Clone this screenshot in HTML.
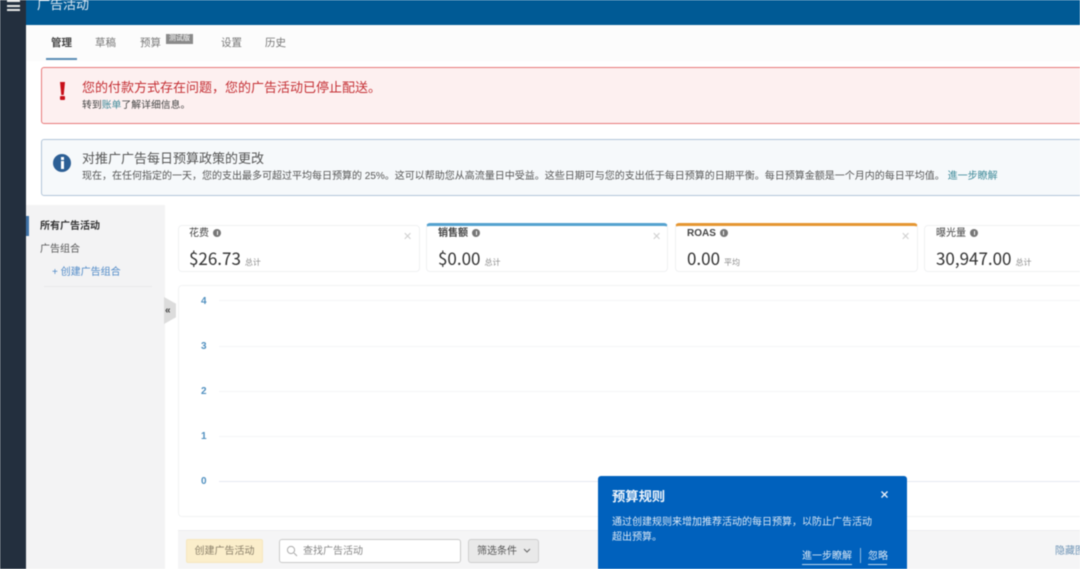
<!DOCTYPE html>
<html lang="zh"><head><meta charset="utf-8"><title>广告活动</title>
<style>
*{box-sizing:border-box}
html,body{margin:0;padding:0;width:1080px;height:569px;overflow:hidden;background:#fff}
body{position:relative;font-family:"Liberation Sans","Noto Sans CJK SC",sans-serif;color:#333}
.a{position:absolute;white-space:nowrap}
#wrap{position:absolute;left:0;top:0;width:1080px;height:569px;overflow:hidden;filter:blur(.5px)}
.card{position:absolute;top:225px;height:47px;background:#fff;border:1px solid #f0f1f2;border-radius:4px}
.card.t{top:223px;height:49px;border-top:3px solid}
.lbl{position:absolute;font-size:10px;color:#444;white-space:nowrap;line-height:12px}
.val{position:absolute;font-family:"Noto Sans CJK SC","Liberation Sans",sans-serif;font-size:17px;color:#333;white-space:nowrap;line-height:20px}
.sub{font-size:8px;color:#888;margin-left:4px}
.i{display:inline-block;position:relative;width:8px;height:8px;border-radius:50%;background:#777;margin-left:4px;vertical-align:-1px}
.i:after{content:"";position:absolute;left:3.5px;top:2px;width:1px;height:4px;background:#fff}
.x{position:absolute;font-size:11px;color:#d0d0d0;line-height:12px}
.y{position:absolute;left:201px;width:8px;font-size:10px;font-weight:bold;color:#4f8fbf;line-height:12px}
.g{position:absolute;left:219px;right:0;height:1px;background:#f4f5f7}
</style></head><body>
<div id="wrap">
<div class="a" style="left:0;top:0;width:26px;height:569px;background:#232f3e"></div>
<div class="a" style="left:7px;top:0;width:13px;height:2px;background:#e8e8e8"></div>
<div class="a" style="left:7px;top:5px;width:13px;height:2px;background:#e8e8e8"></div>
<div class="a" style="left:7px;top:9px;width:13px;height:2px;background:#e8e8e8"></div>

<div class="a" style="left:26px;top:0;width:1054px;height:25px;background:#005a95"></div>
<div class="a" style="left:37px;top:-4px;font-size:13px;line-height:17px;color:#dfeaf3">广告活动</div>

<div class="a" style="left:26px;top:25px;width:1054px;height:36px;background:#fcfcfc"></div>
<div class="a" style="left:51px;top:36px;font-size:10.5px;line-height:14px;font-weight:bold;color:#444">管理</div>
<div class="a" style="left:46px;top:58px;width:31px;height:2px;background:#5b8db5"></div>
<div class="a" style="left:95px;top:36px;font-size:10.5px;line-height:14px;color:#777">草稿</div>
<div class="a" style="left:140px;top:36px;font-size:10.5px;line-height:14px;color:#777">预算</div>
<div class="a" style="left:166px;top:34px;width:27px;height:10px;background:#8a8a8a;color:#fff;font-size:7px;line-height:9px;text-align:center">测试版</div>
<div class="a" style="left:221px;top:36px;font-size:10.5px;line-height:14px;color:#777">设置</div>
<div class="a" style="left:265px;top:36px;font-size:10.5px;line-height:14px;color:#777">历史</div>

<div class="a" style="left:41px;top:67px;width:1045px;height:57px;background:#fdf0f0;border:1px solid #e8797a;border-radius:3px"></div>
<div class="a" style="left:60px;top:82px;width:5px;height:13px;background:#c8101a;clip-path:polygon(0 0,100% 0,75% 100%,25% 100%)"></div>
<div class="a" style="left:60px;top:96px;width:5px;height:4px;background:#c8101a;border-radius:1px"></div>
<div class="a" style="left:82px;top:80px;font-size:13px;line-height:16px;color:#c42e33">您的付款方式存在问题，您的广告活动已停止配送。</div>
<div class="a" style="left:82px;top:99px;font-size:9.85px;line-height:13px;color:#444">转到<span style="color:#3f8a99">账单</span>了解详细信息。</div>

<div class="a" style="left:41px;top:139px;width:1045px;height:57px;background:#f6f9fb;border:1px solid #b2c5d8;border-radius:3px"></div>
<div class="a" style="left:53px;top:154px;width:18px;height:18px;border-radius:50%;background:#2c5f95"></div>
<div class="a" style="left:61px;top:157px;width:2.5px;height:2.5px;background:#fff"></div>
<div class="a" style="left:60.5px;top:161px;width:3px;height:8px;background:#fff"></div>
<div class="a" style="left:82px;top:150px;font-size:13px;line-height:17px;color:#555">对推广广告每日预算政策的更改</div>
<div class="a" style="left:82px;top:170px;font-size:10px;line-height:14px;color:#555">现在，在任何指定的一天，您的支出最多可超过平均每日预算的 25%。这可以帮助您从高流量日中受益。这些日期可与您的支出低于每日预算的日期平衡。每日预算金额是一个月内的每日平均值。 <span style="color:#3f8a99">進一步瞭解</span></div>

<div class="a" style="left:26px;top:205px;width:139px;height:364px;background:#f3f3f4"></div>
<div class="a" style="left:26px;top:216px;width:3px;height:20px;background:#3f73a8"></div>
<div class="a" style="left:40px;top:220px;font-size:10px;line-height:13px;font-weight:bold;color:#333">所有广告活动</div>
<div class="a" style="left:40px;top:243px;font-size:10px;line-height:13px;color:#555">广告组合</div>
<div class="a" style="left:52px;top:266px;font-size:10px;line-height:13px;color:#4e89c7">+ 创建广告组合</div>
<div class="a" style="left:44px;top:286px;width:108px;height:1px;background:#e9e9ea"></div>
<div class="a" style="left:164px;top:297px;width:12px;height:27px;background:#dcdcdc;clip-path:polygon(0 0,100% 25%,100% 75%,0 100%)"></div>
<div class="a" style="left:165px;top:304px;font-size:10px;line-height:13px;font-weight:bold;color:#444">«</div>

<div class="card" style="left:178px;width:242px"></div>
<div class="lbl" style="left:189px;top:228px">花费<span class="i"></span></div>
<div class="val" style="left:189px;top:248px">$26.73<span class="sub">总计</span></div>
<div class="x" style="left:403px;top:231px">✕</div>

<div class="card t" style="left:426px;width:242px;border-top-color:#55a2cf"></div>
<div class="lbl" style="left:438px;top:228px;font-weight:bold">销售额<span class="i"></span></div>
<div class="val" style="left:438px;top:248px">$0.00<span class="sub">总计</span></div>
<div class="x" style="left:652px;top:231px">✕</div>

<div class="card t" style="left:675px;width:243px;border-top-color:#e59632"></div>
<div class="lbl" style="left:687px;top:228px;font-weight:bold">ROAS<span class="i"></span></div>
<div class="val" style="left:687px;top:248px">0.00<span class="sub">平均</span></div>
<div class="x" style="left:901px;top:231px">✕</div>

<div class="card" style="left:924px;width:170px"></div>
<div class="lbl" style="left:936px;top:228px">曝光量<span class="i"></span></div>
<div class="val" style="left:936px;top:248px">30,947.00<span class="sub">总计</span></div>

<div class="a" style="left:178px;top:285px;width:920px;height:232px;background:#fff;border:1px solid #f2f3f4;border-radius:4px"></div>
<div class="y" style="top:296px">4</div><div class="g" style="top:300px"></div>
<div class="y" style="top:341px">3</div><div class="g" style="top:346px"></div>
<div class="y" style="top:386px">2</div><div class="g" style="top:391px"></div>
<div class="y" style="top:431px">1</div><div class="g" style="top:436px"></div>
<div class="y" style="top:476px">0</div><div class="g" style="top:481px;background:#e6e9f2"></div>

<div class="a" style="left:178px;top:530px;width:902px;height:39px;background:#f5f5f6;border-top:1px solid #eeeeef"></div>
<div class="a" style="left:186px;top:539px;width:77px;height:24px;background:#fbeecb;border:1px solid #f6e7bf;border-radius:2px;font-size:10px;line-height:23px;text-align:center;color:#8a7f68">创建广告活动</div>
<div class="a" style="left:279px;top:539px;width:182px;height:24px;background:#fff;border:1px solid #c9c9c9;border-radius:3px"></div>
<svg class="a" style="left:286px;top:545px" width="12" height="12" viewBox="0 0 12 12"><circle cx="5" cy="5" r="3.6" fill="none" stroke="#aaa" stroke-width="1"/><path d="M8 8l3 3" stroke="#aaa" stroke-width="1"/></svg>
<div class="a" style="left:303px;top:545px;font-size:10px;line-height:14px;color:#888">查找广告活动</div>
<div class="a" style="left:468px;top:539px;width:71px;height:24px;background:#e9e9e9;border:1px solid #cfcfcf;border-radius:3px"></div>
<div class="a" style="left:477px;top:545px;font-size:10px;line-height:14px;color:#555">筛选条件</div>
<svg class="a" style="left:523px;top:548px" width="8" height="6" viewBox="0 0 8 6"><path d="M1 1l3 3 3-3" fill="none" stroke="#666" stroke-width="1"/></svg>
<div class="a" style="left:1055px;top:545px;font-size:10px;line-height:14px;color:#6d93b5">隐藏图表</div>

<div class="a" style="left:598px;top:476px;width:309px;height:93px;background:#0061bd;border-radius:3px 3px 0 0"></div>
<div class="a" style="left:612px;top:488px;font-size:13.3px;line-height:17px;font-weight:bold;color:#eaf2fa">预算规则</div>
<svg class="a" style="left:880px;top:490px" width="9" height="9" viewBox="0 0 9 9"><path d="M1.5 1.5l6 6M7.5 1.5l-6 6" stroke="#e8f0f8" stroke-width="1.4"/></svg>
<div class="a" style="left:612px;top:515px;font-size:10px;line-height:15px;color:#dbe8f5">通过创建规则来增加推荐活动的每日预算，以防止广告活动<br>超出预算。</div>
<div class="a" style="left:802px;top:550px;font-size:10px;line-height:13px;color:#dbe8f5">進一步瞭解</div>
<div class="a" style="left:802px;top:564px;width:50px;height:1px;background:#bcd5ec"></div>
<div class="a" style="left:860px;top:548px;width:1px;height:15px;background:#8fb8df"></div>
<div class="a" style="left:868px;top:550px;font-size:10px;line-height:13px;color:#dbe8f5">忽略</div>
<div class="a" style="left:868px;top:564px;width:19px;height:1px;background:#bcd5ec"></div>
</div>
</body></html>
